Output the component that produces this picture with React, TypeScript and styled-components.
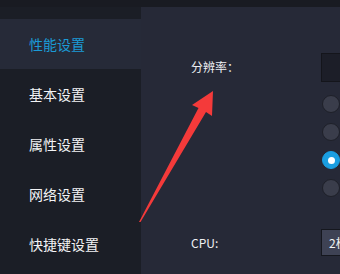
import styled, { createGlobalStyle } from 'styled-components';

const GlobalStyle = createGlobalStyle`
  html, body {
    margin: 0;
    padding: 0;
    background: #191b22;
    overflow: hidden;
  }
  body {
    font-family: "Noto Sans CJK SC", "Noto Sans", sans-serif;
  }
`;

const Page = styled.div`
  position: relative;
  width: 340px;
  height: 274px;
  overflow: hidden;
  background: #191b22;
  padding-top: 7px;
  box-sizing: border-box;
  display: flex;
`;

const Sidebar = styled.nav`
  width: 141px;
  flex-shrink: 0;
  background: #1b1e26;
  padding-top: 12px;
  display: flex;
  flex-direction: column;
`;

const MenuItem = styled.div<{ $active?: boolean }>`
  height: 50px;
  display: flex;
  align-items: center;
  padding-left: 29px;
  font-size: 14px;
  color: ${p => (p.$active ? '#1b9ad6' : '#f2f3f5')};
  background: ${p => (p.$active ? '#262a38' : 'transparent')};
`;

const Panel = styled.main`
  flex: 1;
  background: #262937;
  padding: 46px 0 0 50px;
  display: flex;
  flex-direction: column;
  gap: 32px;
  min-width: 0;
`;

const Row = styled.div`
  display: flex;
  align-items: flex-start;
`;

const Label = styled.div<{ $h: number }>`
  width: 130px;
  flex-shrink: 0;
  height: ${p => p.$h}px;
  display: flex;
  align-items: center;
  font-size: 12px;
  color: #eef0f3;
`;

const Controls = styled.div`
  display: flex;
  flex-direction: column;
  gap: 13px;
`;

const ResolutionBox = styled.div`
  width: 120px;
  height: 27px;
  background: #1c1e28;
  border: 1px solid #14151b;
`;

const RadioList = styled.div`
  display: flex;
  flex-direction: column;
  gap: 10px;
`;

const Radio = styled.div<{ $checked?: boolean }>`
  width: 16px;
  height: 16px;
  border-radius: 50%;
  margin-left: 1px;
  background: ${p => (p.$checked ? '#1a9ee1' : '#3a3d4b')};
  border: 1px solid ${p => (p.$checked ? '#1a9ee1' : '#1e2029')};
  display: flex;
  align-items: center;
  justify-content: center;

  &::after {
    content: '';
    display: ${p => (p.$checked ? 'block' : 'none')};
    width: 7px;
    height: 7px;
    border-radius: 50%;
    background: #ffffff;
  }
`;

const Select = styled.div`
  width: 120px;
  height: 25px;
  background: #3e4254;
  border: 1px solid #15171e;
  display: flex;
  align-items: center;
  padding-left: 7px;
  font-size: 12px;
  color: #f2f3f5;
  white-space: nowrap;
`;

const Arrow = styled.svg`
  position: absolute;
  left: 0;
  top: 0;
  pointer-events: none;
`;

const menu = ['性能设置', '基本设置', '属性设置', '网络设置', '快捷键设置'];

export default function App() {
  return (
    <>
      <GlobalStyle />
      <Page>
        <Sidebar>
          {menu.map((m, i) => (
            <MenuItem key={m} $active={i === 0}>
              {m}
            </MenuItem>
          ))}
        </Sidebar>
        <Panel>
          <Row>
            <Label $h={27}>分辨率：</Label>
            <Controls>
              <ResolutionBox />
              <RadioList>
                <Radio />
                <Radio />
                <Radio $checked />
                <Radio />
              </RadioList>
            </Controls>
          </Row>
          <Row>
            <Label $h={27}>CPU:</Label>
            <Select>2核</Select>
          </Row>
        </Panel>
        <Arrow width="340" height="274" viewBox="0 0 340 274">
          <polygon
            points="139,222 198.5,108 192,105 213,91 212,116 206,112 140.5,222"
            fill="#f43a3a"
          />
        </Arrow>
      </Page>
    </>
  );
}
